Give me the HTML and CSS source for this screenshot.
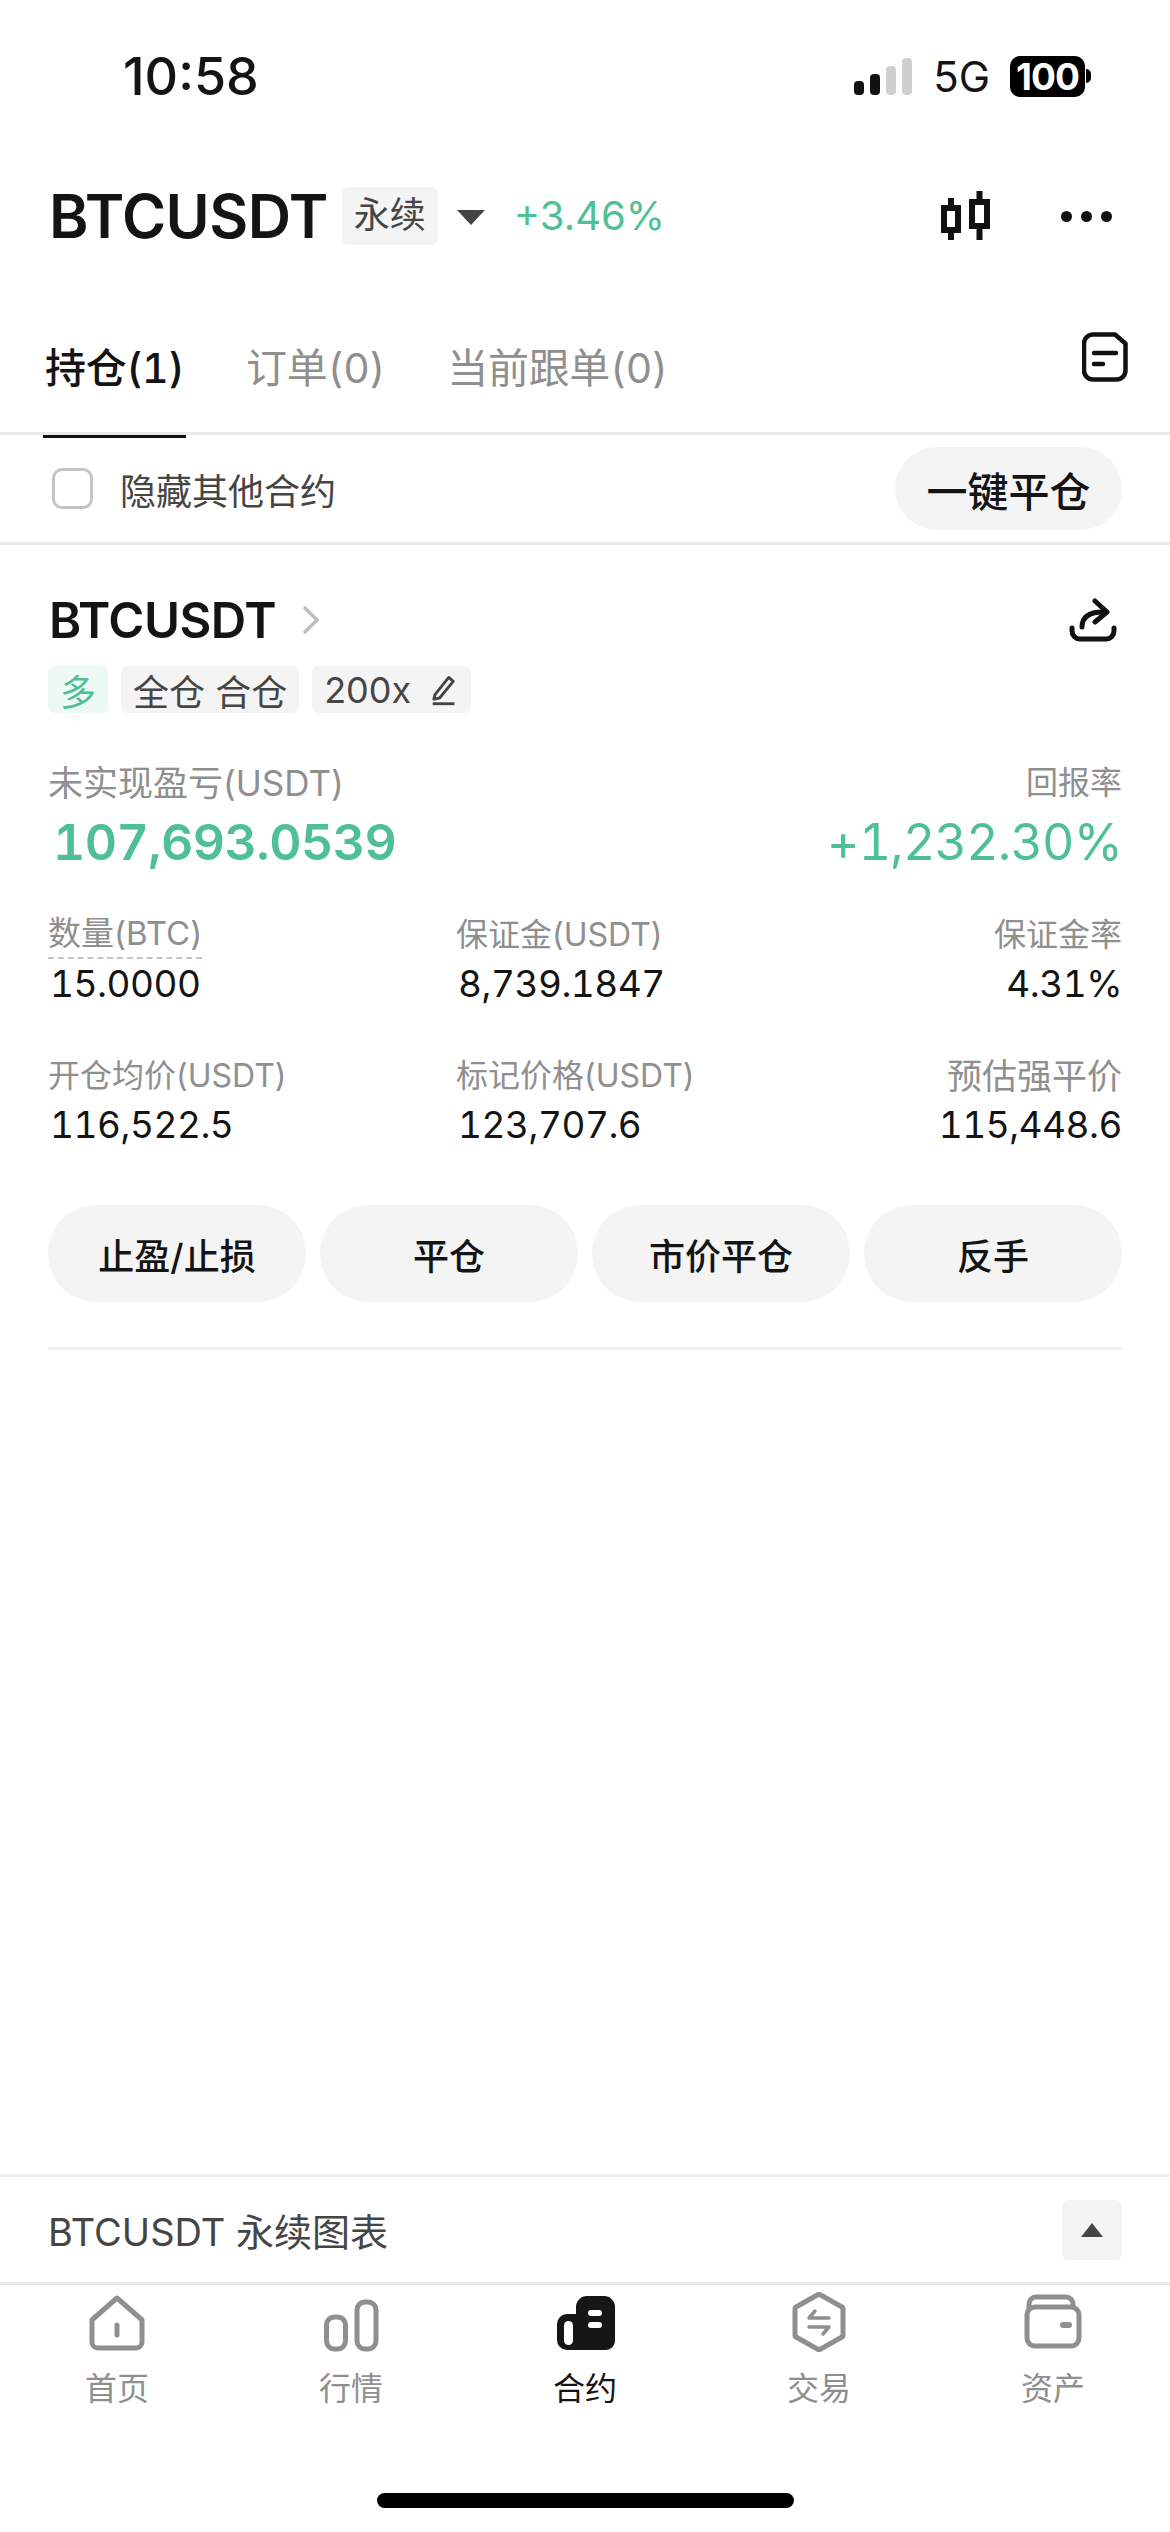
FILE: index.html
```html
<!DOCTYPE html>
<html lang="zh-CN">
<head>
    <meta charset="UTF-8">
    <meta name="viewport" content="width=device-width, initial-scale=1.0">
    <title>BTCUSDT 持仓</title>
    <link rel="stylesheet" href="styles.css">
</head>
<body>
    <div class="app">
        <!-- Status bar -->
        <div class="status-bar">
            <span class="time">10:58</span>
            <div class="status-right">
                <div class="signal">
                    <i class="bar bar-1"></i><i class="bar bar-2"></i><i class="bar bar-3"></i><i class="bar bar-4"></i>
                </div>
                <span class="network">5G</span>
                <div class="battery"><span class="battery-level">100</span><i class="battery-tip"></i></div>
            </div>
        </div>

        <!-- Symbol header -->
        <div class="symbol-header">
            <span class="symbol-name">BTCUSDT</span>
            <span class="symbol-tag">永续</span>
            <i class="caret"></i>
            <span class="symbol-change">+3.46%</span>
            <div class="header-actions">
                <svg class="icon-candles" viewBox="0 0 52 54" fill="none" stroke="#111" stroke-width="6">
                    <rect x="3" y="19" width="14" height="22"/>
                    <path d="M10 9v10M10 41v10"/>
                    <rect x="31" y="13" width="15" height="24"/>
                    <path d="M38.500 2v11M38.500 37v14"/>
                </svg>
                <div class="dots"><i></i><i></i><i></i></div>
            </div>
        </div>

        <!-- Tabs -->
        <div class="tabs">
            <span class="tab active">持仓(1)</span>
            <span class="tab">订单(0)</span>
            <span class="tab">当前跟单(0)</span>
            <svg class="icon-note" viewBox="0 0 46 50" fill="none" stroke="#111" stroke-width="4.500" stroke-linecap="round" stroke-linejoin="round">
                <path d="M10 2.500h23l10.500 9v27a9 9 0 0 1-9 9H11a9 9 0 0 1-9-9v-27a9 9 0 0 1 8-9z"/>
                <path d="M12 21h22M12 32h9"/>
            </svg>
        </div>

        <!-- Filter row -->
        <div class="filter-row">
            <label class="hide-others"><i class="checkbox"></i>隐藏其他合约</label>
            <button class="pill-btn">一键平仓</button>
        </div>

        <!-- Position card -->
        <div class="position">
            <div class="position-title">
                <span class="position-name">BTCUSDT</span>
                <svg class="icon-chevron" viewBox="0 0 20 30" fill="none" stroke="#bdbdbd" stroke-width="3.500"><path d="M3 2l13 13L3 28"/></svg>
                <svg class="icon-share" viewBox="0 0 48 44" fill="none" stroke="#111" stroke-width="5" stroke-linecap="round" stroke-linejoin="round">
                    <path d="M3 30v3a8 8 0 0 0 8 8h26a8 8 0 0 0 8-8v-3"/>
                    <path d="M13 29c0-10 7-15 21-15"/>
                    <path d="M26 3l12 11-12 10"/>
                </svg>
            </div>
            <div class="tags">
                <span class="tag tag-long">多</span>
                <span class="tag">全仓 合仓</span>
                <span class="tag tag-leverage">200x
                    <svg class="icon-edit" viewBox="0 0 24 28" fill="none" stroke="#444" stroke-width="2.500" stroke-linejoin="round"><path d="M5 18L17 3l4 3.500L9 21l-5 1z"/><path d="M3 26h19"/></svg>
                </span>
            </div>

            <div class="pnl-labels">
                <span class="label label-wide">未实现盈亏(USDT)</span>
                <span class="label">回报率</span>
            </div>
            <div class="pnl-values">
                <span class="pnl">107,693.0539</span>
                <span class="roi">+1,232.30%</span>
            </div>

            <div class="stats">
                <div class="stat">
                    <span class="label dashed">数量(BTC)</span>
                    <span class="value">15.0000</span>
                </div>
                <div class="stat">
                    <span class="label">保证金(USDT)</span>
                    <span class="value">8,739.1847</span>
                </div>
                <div class="stat stat-right">
                    <span class="label">保证金率</span>
                    <span class="value">4.31%</span>
                </div>
                <div class="stat">
                    <span class="label">开仓均价(USDT)</span>
                    <span class="value">116,522.5</span>
                </div>
                <div class="stat">
                    <span class="label">标记价格(USDT)</span>
                    <span class="value">123,707.6</span>
                </div>
                <div class="stat stat-right">
                    <span class="label label-wide">预估强平价</span>
                    <span class="value">115,448.6</span>
                </div>
            </div>

            <div class="actions">
                <button class="action-btn">止盈/止损</button>
                <button class="action-btn">平仓</button>
                <button class="action-btn">市价平仓</button>
                <button class="action-btn">反手</button>
            </div>
        </div>

        <div class="spacer"></div>

        <!-- Chart drawer -->
        <div class="chart-bar">
            <span class="chart-title">BTCUSDT 永续图表</span>
            <div class="chart-toggle"><i class="caret-up"></i></div>
        </div>

        <!-- Bottom nav -->
        <nav class="nav">
            <div class="nav-item">
                <svg viewBox="0 0 60 60" fill="none" stroke="#8f8f8f" stroke-width="5" stroke-linejoin="round">
                    <path d="M30 6l24 21a2 2 0 0 1 1 2v21a6 6 0 0 1-6 6H11a6 6 0 0 1-6-6V29a2 2 0 0 1 1-2z"/>
                    <path d="M30 33v10" stroke-linecap="round"/>
                </svg>
                <span>首页</span>
            </div>
            <div class="nav-item">
                <svg viewBox="0 0 60 60" fill="none" stroke="#8f8f8f" stroke-width="5">
                    <rect x="5.500" y="25" width="19" height="32" rx="8"/>
                    <rect x="36" y="10" width="19" height="47" rx="8"/>
                </svg>
                <span>行情</span>
            </div>
            <div class="nav-item active">
                <svg viewBox="0 0 60 60">
                    <path d="M21 15a11 11 0 0 1 11-11h17a11 11 0 0 1 11 11v34a9 9 0 0 1-9 9H12A10 10 0 0 1 2 48V32a10 10 0 0 1 10-10h9z" fill="#161616"/>
                    <rect x="9" y="29" width="9" height="24" rx="4.500" fill="#fff"/>
                    <rect x="33" y="18" width="14" height="6" rx="3" fill="#fff"/>
                    <rect x="33" y="30" width="14" height="6" rx="3" fill="#fff"/>
                </svg>
                <span>合约</span>
            </div>
            <div class="nav-item">
                <svg viewBox="0 0 60 60" fill="none" stroke="#8f8f8f" stroke-width="5" stroke-linejoin="round">
                    <path d="M30 2l23 13a2 2 0 0 1 1 2v26a2 2 0 0 1-1 2L30 58 7 45a2 2 0 0 1-1-2V17a2 2 0 0 1 1-2z"/>
                    <path d="M20 26h20M26 19l-6 7M20 35h20M34 42l6-7" stroke-width="3.500" stroke-linecap="round"/>
                </svg>
                <span>交易</span>
            </div>
            <div class="nav-item">
                <svg viewBox="0 0 60 60" fill="none" stroke="#8f8f8f" stroke-width="5" stroke-linejoin="round">
                    <path d="M6 17v-5a7 7 0 0 1 7-7h30a7 7 0 0 1 7 7v5"/>
                    <rect x="4" y="15" width="52" height="39" rx="8"/>
                    <path d="M40 33h6" stroke-width="6" stroke-linecap="round"/>
                </svg>
                <span>资产</span>
            </div>
        </nav>

        <div class="home-bar"><i class="home-indicator"></i></div>
    </div>
</body>
</html>
```

FILE: styles.css
```css
:root {
    --text-primary: #141414;
    --text-secondary: #8f8f8f;
    --text-dark: #454545;
    --green: #4fbf95;
    --chip: #f4f4f4;
    --line: #e9e9e9;
}

* {
    margin: 0;
    padding: 0;
    box-sizing: border-box;
}

body {
    font-family: 'Inter', 'Noto Sans CJK SC', sans-serif;
    background-color: #fff;
    color: var(--text-primary);
}

i {
    display: block;
}

button {
    font-family: inherit;
    border: none;
    color: var(--text-primary);
}

.app {
    width: 1170px;
    height: 2532px;
    display: flex;
    flex-direction: column;
    overflow: hidden;
}

/* Status bar */
.status-bar {
    height: 155px;
    padding: 46px 79px 0 123px;
    display: flex;
    justify-content: space-between;
    align-items: flex-start;
}

.time {
    font-size: 52px;
    line-height: 62px;
    font-weight: 500;
}

.status-right {
    display: flex;
    align-items: center;
    height: 60px;
}

.signal {
    display: flex;
    align-items: flex-end;
    gap: 6px;
    height: 37px;
    margin-right: 21px;
}

.bar {
    width: 10px;
    border-radius: 4px;
    background-color: #111;
}

.bar-1 { height: 14px; }
.bar-2 { height: 21px; }
.bar-3 { height: 29px; background-color: #cfcfcf; }
.bar-4 { height: 37px; background-color: #cfcfcf; }

.network {
    font-size: 42px;
    margin-right: 20px;
}

.battery {
    display: flex;
    align-items: center;
}

.battery-level {
    width: 75px;
    height: 41px;
    border-radius: 10px;
    background-color: #000;
    color: #fff;
    font-size: 37px;
    font-weight: 700;
    line-height: 41px;
    text-align: center;
    letter-spacing: -1px;
}

.battery-tip {
    width: 5px;
    height: 14px;
    margin-left: 1px;
    border-radius: 0 7px 7px 0;
    background-color: #000;
}

/* Symbol header */
.symbol-header {
    height: 124px;
    padding: 32px 58px 0 49px;
    display: flex;
    align-items: flex-start;
}

.symbol-name {
    font-size: 60px;
    line-height: 58px;
    font-weight: 600;
    letter-spacing: -0.5px;
}

.symbol-tag {
    margin-left: 14px;
    width: 96px;
    height: 58px;
    border-radius: 6px;
    background-color: var(--chip);
    color: var(--text-dark);
    font-size: 36px;
    line-height: 56px;
    text-align: center;
}

.caret {
    margin: 23px 0 0 19px;
    width: 0;
    height: 0;
    border-left: 14px solid transparent;
    border-right: 14px solid transparent;
    border-top: 15px solid #444;
}

.symbol-change {
    margin-left: 29px;
    font-size: 40px;
    line-height: 58px;
    color: var(--green);
}

.header-actions {
    margin-left: auto;
    display: flex;
    align-items: center;
    gap: 68px;
    height: 58px;
}

.icon-candles {
    width: 52px;
    height: 54px;
}

.dots {
    display: flex;
    gap: 9px;
}

.dots i {
    width: 11px;
    height: 11px;
    border-radius: 50%;
    background-color: #111;
}

/* Tabs */
.tabs {
    height: 156px;
    padding: 60px 43px 0 45px;
    display: flex;
    align-items: flex-start;
    gap: 62px;
    border-bottom: 3px solid var(--line);
    position: relative;
}

.tab {
    font-size: 41px;
    line-height: 58px;
    font-variant-numeric: tabular-nums;
    letter-spacing: -0.3px;
    color: var(--text-secondary);
}

.tab.active {
    color: var(--text-primary);
    font-weight: 500;
    position: relative;
}

.tab.active::after {
    content: "";
    position: absolute;
    left: -2px;
    right: -2px;
    top: 96px;
    height: 3px;
    background-color: #111;
}

.icon-note {
    position: absolute;
    right: 42px;
    top: 53px;
    width: 46px;
    height: 50px;
}

/* Filter row */
.filter-row {
    height: 110px;
    padding: 0 48px 0 52px;
    display: flex;
    justify-content: space-between;
    align-items: center;
    border-bottom: 3px solid var(--line);
}

.hide-others {
    display: flex;
    align-items: center;
    gap: 27px;
    font-size: 36px;
    color: var(--text-dark);
}

.checkbox {
    width: 41px;
    height: 41px;
    border: 3px solid #c4c4c4;
    border-radius: 10px;
}

.pill-btn {
    width: 227px;
    height: 83px;
    border-radius: 42px;
    background-color: var(--chip);
    font-size: 41px;
    font-weight: 500;
}

/* Position card */
.position {
    margin: 0 48px;
    padding-top: 50px;
    height: 805px;
    border-bottom: 3px solid #f0f0f0;
}

.position-title {
    display: flex;
    align-items: center;
    height: 50px;
    padding-left: 1px;
}

.position-name {
    font-size: 49px;
    font-weight: 600;
    letter-spacing: -0.5px;
}

.icon-chevron {
    margin-left: 25px;
    width: 20px;
    height: 30px;
}

.icon-share {
    margin-left: auto;
    margin-right: 5px;
    width: 48px;
    height: 44px;
}

.tags {
    display: flex;
    gap: 13px;
    margin-top: 21px;
}

.tag {
    height: 47px;
    padding: 0 12px;
    border-radius: 6px;
    display: flex;
    align-items: center;
    gap: 18px;
    background-color: var(--chip);
    color: var(--text-dark);
    font-size: 36px;
}

.tag-long {
    background-color: #edf9f4;
    color: var(--green);
}

.tag-leverage {
    padding-right: 14px;
}

.icon-edit {
    width: 28px;
    height: 32px;
}

.label {
    font-size: 32px;
    line-height: 48px;
    color: var(--text-secondary);
}

.label-wide {
    font-size: 35px;
}

.pnl-labels,
.pnl-values {
    display: flex;
    justify-content: space-between;
    align-items: center;
}

.pnl-labels {
    margin-top: 46px;
}

.pnl-values {
    margin-top: 5px;
    height: 60px;
}

.pnl {
    margin-left: 5px;
    font-size: 50px;
    font-weight: 600;
    font-variant-numeric: tabular-nums;
    letter-spacing: -0.6px;
    color: var(--green);
}

.roi {
    font-size: 50px;
    font-variant-numeric: tabular-nums;
    letter-spacing: -0.8px;
    color: var(--green);
}

.stats {
    margin-top: 39px;
    display: grid;
    grid-template-columns: 408px 1fr 1fr;
    row-gap: 43px;
}

.stat {
    display: flex;
    flex-direction: column;
    align-items: flex-start;
}

.stat-right {
    align-items: flex-end;
}

.dashed {
    font-size: 33px;
    line-height: 44px;
    height: 48px;
    border-bottom: 2px dashed #c4c4c4;
}

.value {
    font-size: 37px;
    line-height: 50px;
    font-variant-numeric: tabular-nums;
    letter-spacing: -0.5px;
    margin-left: 2px;
}

.actions {
    margin-top: 55px;
    display: grid;
    grid-template-columns: repeat(4, 1fr);
    gap: 14px;
}

.action-btn {
    height: 97px;
    border-radius: 48px;
    background-color: var(--chip);
    font-size: 36px;
    font-weight: 500;
}

.spacer {
    flex: 1;
}

/* Chart drawer */
.chart-bar {
    height: 111px;
    padding: 0 48px;
    display: flex;
    justify-content: space-between;
    align-items: center;
    border-top: 3px solid #f0f0f0;
    border-bottom: 3px solid var(--line);
}

.chart-title {
    font-size: 38px;
    color: var(--text-dark);
}

.chart-toggle {
    width: 60px;
    height: 60px;
    border-radius: 6px;
    background-color: var(--chip);
    display: flex;
    align-items: center;
    justify-content: center;
}

.caret-up {
    width: 0;
    height: 0;
    border-left: 11px solid transparent;
    border-right: 11px solid transparent;
    border-bottom: 14px solid #444;
}

/* Bottom nav */
.nav {
    display: grid;
    grid-template-columns: repeat(5, 1fr);
    padding: 7px 0 0;
}

.nav-item {
    display: flex;
    flex-direction: column;
    align-items: center;
    color: var(--text-secondary);
    font-size: 32px;
    line-height: 44px;
}

.nav-item svg {
    width: 60px;
    height: 60px;
    margin-bottom: 15px;
}

.nav-item.active {
    color: var(--text-primary);
}

.home-bar {
    height: 121px;
    padding-top: 82px;
    display: flex;
    justify-content: center;
}

.home-indicator {
    width: 417px;
    height: 15px;
    border-radius: 8px;
    background-color: #000;
}
```
